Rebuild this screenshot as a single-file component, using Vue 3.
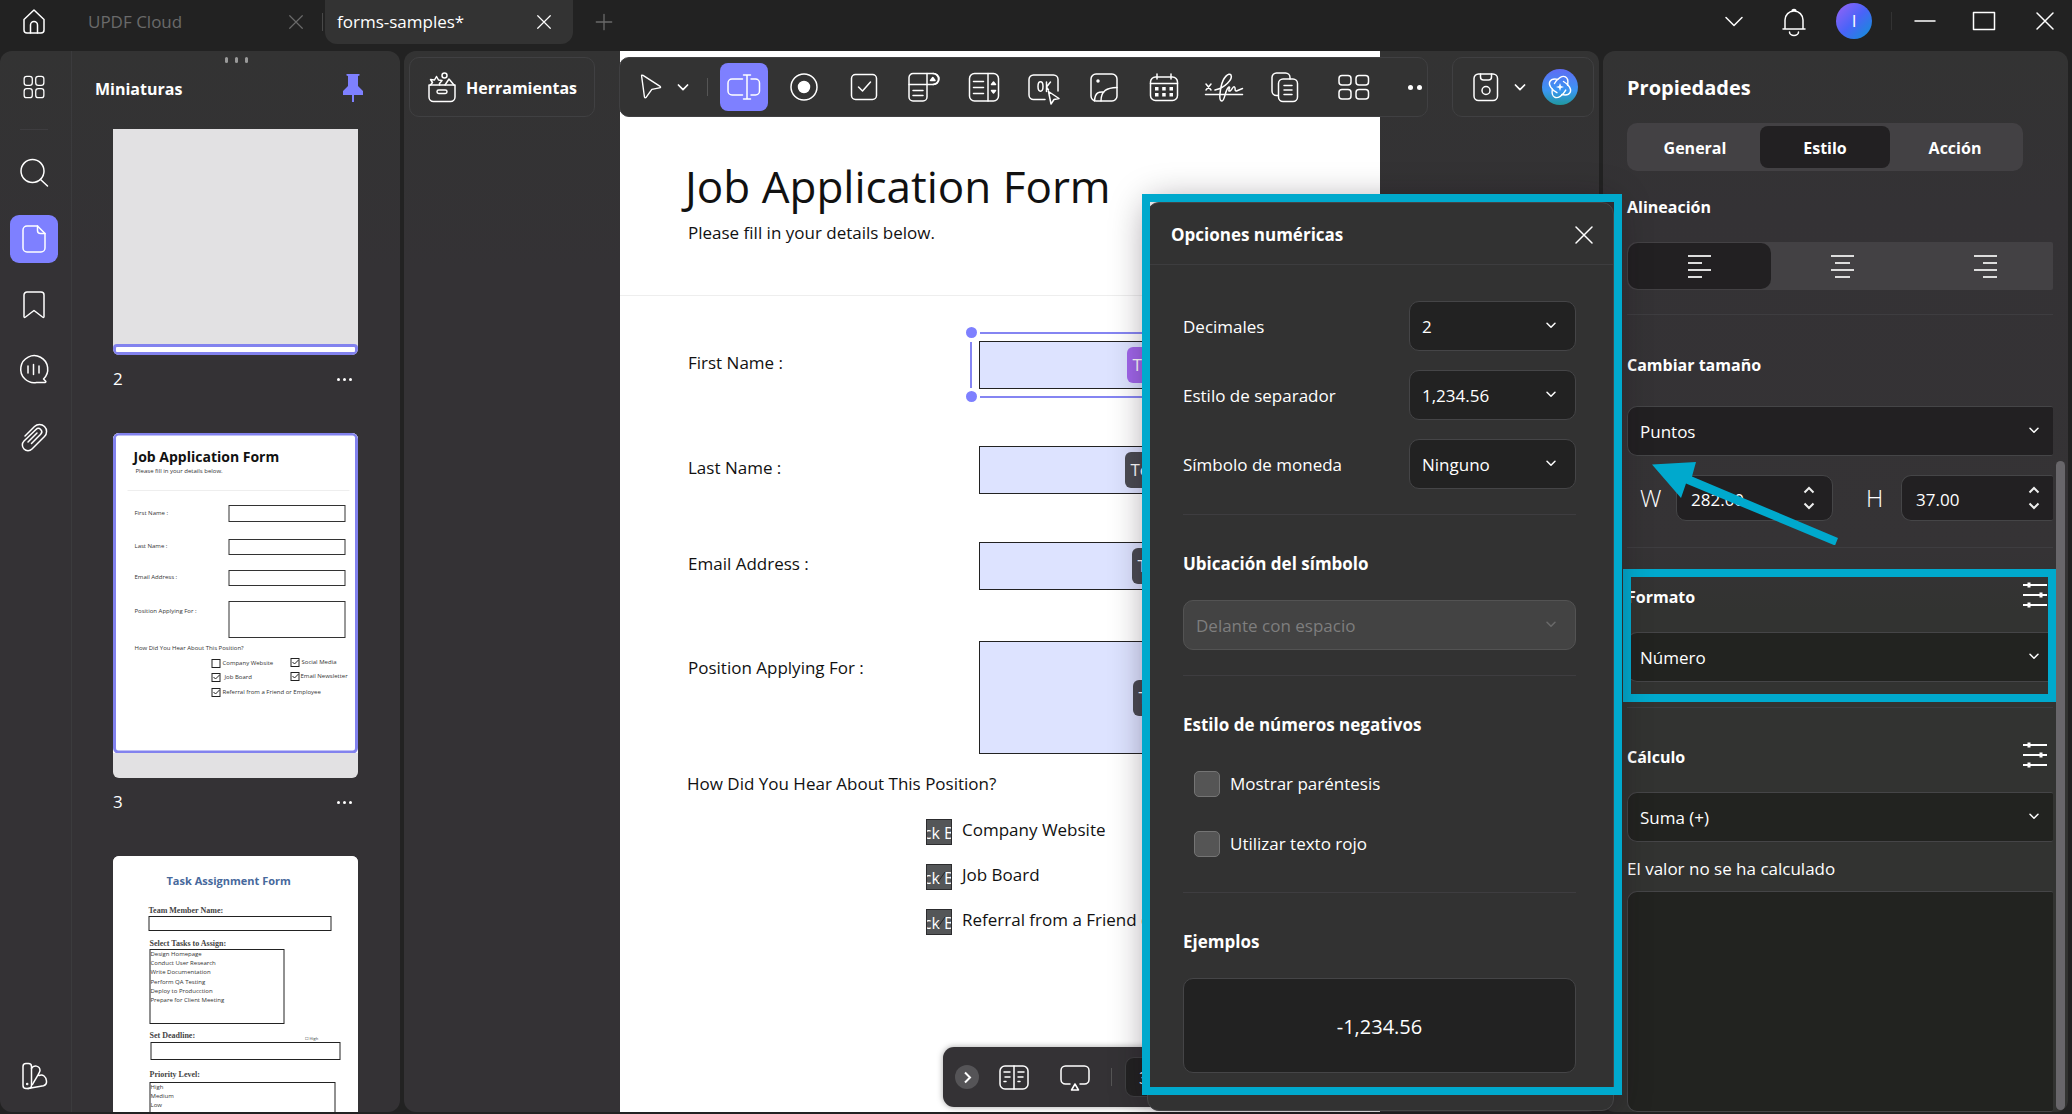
<script setup>
import { ref } from 'vue'

const icons = {
  home: '<path d="M4 12.5 14 3l10 9.500V23a3 3 0 0 1-3 3H7a3 3 0 0 1-3-3Z"/><path d="M10.500 26v-8a3.500 3.500 0 0 1 7 0v8"/>',
  close: '<path d="M6 6l16 16M22 6 6 22"/>',
  plus: '<path d="M14 5v18M5 14h18"/>',
  chevron: '<path d="m6 10.500 8 8 8-8"/>',
  bell: '<path d="M3 22h22M5 22V13a9 9 0 0 1 18 0v9M12 4.500a2 2 0 1 1 4 0M9.500 25a4.500 3.500 0 0 0 9 0"/>',
  minus: '<path d="M4 14h20"/>',
  square: '<path d="M3.500 5.500h21v17h-21z"/>',
  grid: '<rect x="2.500" y="1.500" width="9.500" height="10.500" rx="3"/><rect x="16" y="1.500" width="9.500" height="10.500" rx="3"/><rect x="2.500" y="16" width="9.500" height="10.500" rx="3"/><rect x="16" y="16" width="9.500" height="10.500" rx="3"/>',
  search: '<circle cx="12.500" cy="12" r="11.500"/><path d="m20.500 20.500 7 6.500"/>',
  page: '<path d="M7 1h10.500L25 8.500V23a4 4 0 0 1-4 4H7a4 4 0 0 1-4-4V5a4 4 0 0 1 4-4Z"/><path d="M17.500 1v4.500a3 3 0 0 0 3 3H25"/>',
  bookmark: '<path d="M4 4a3 3 0 0 1 3-3h14a3 3 0 0 1 3 3v21.500q0 1.500-1.500.500L14 19.500 5.500 26Q4 27 4 25.500Z"/>',
  comment: '<g transform="translate(-.5 -1.500)"><path d="M24 23.500a13.500 13.500 0 1 0-7 3.500h8.500q1.500-.500.500-1.500Z"/><path d="M8.500 10.500v7M14 9v10M19.500 10.500v7"/></g>',
  clip: '<path d="M5 13 14.500 3.500a7 7 0 0 1 10 10L12 26a5.300 5.300 0 0 1-8-8L16 6.500a3.300 3.300 0 0 1 4.700 4.700L11.500 20.500"/><path d="m8 19 9-9"/>',
  swatch: '<rect x="3" y="1.500" width="8.500" height="25" rx="3"/><path d="M11.500 6.500c2-4 8.500-3 8.500 2 0 2-5 9-7.500 14M19 13.500c4-1.500 7 1 7.500 5.500.300 2.500-1 4-3 4.700L8 26.500"/><circle cx="7.200" cy="22" r=".5"/>',
  tools: '<path d="M1 11h26v12a4.500 4.500 0 0 1-4.500 4.500h-17A4.500 4.500 0 0 1 1 23Z"/><path d="M2.500 11 4.500 8.500 2.500 5.500l4 .500L8.500 2.500l2 3.500 3.500.500-2.500 3v1.500M17 11l4-6 5 6"/><circle cx="16.500" cy="1.500" r="2.500"/><rect x="9" y="16" width="10" height="3.500" rx="1.700"/>',
  arrow: '<path d="M5 2.500q-.500-2 1.500-1L24.500 13q2 1.500-.500 2l-8 1.500-6 8.500q-1.500 1.500-2-.500Z"/>',
  textfield: '<path d="M12.500 6H2a4 4 0 0 0-4 4v8a4 4 0 0 0 4 4h10.500M21 6h4.500a4 4 0 0 1 4 4v8a4 4 0 0 1-4 4H21M17 2v24M13.500 2h7M13.500 26h7"/>',
  radio: '<circle cx="14" cy="14" r="13"/><circle cx="14" cy="14" r="5.500" fill="currentColor"/>',
  check: '<rect x="1.500" y="1.500" width="25" height="25" rx="4"/><path d="m8.500 14 4 4 8-9"/>',
  combo: '<path d="M4 .500h19.500a5.500 5.500 0 0 1 0 11H-1V4.500a4 4 0 0 1 4-4Z"/><path d="M-1 11.500V24a4 4 0 0 0 4 4H13a4 4 0 0 0 4-4V.500M3 17.500h10M3 22.500h10"/><path d="M20.500 7.500h4.500l-2.200-3Z" fill="currentColor"/><path d="M23 .500a5.500 5.500 0 0 1 0 11"/>',
  list: '<rect x="-.5" y=".5" width="29" height="27.500" rx="5"/><path d="M18 .500V28M3.500 8.500h10M3.500 14.500h10M3.500 20.500h10"/><path d="M21.500 11.500h4l-2-2.500ZM21.500 17.500h4l-2 2.500Z" fill="currentColor"/>',
  okbtn: '<path d="M15 26.500H3.500a4.500 4.500 0 0 1-4.500-4.500V6.500A4.500 4.500 0 0 1 3.500 2h20A4.500 4.500 0 0 1 28 6.500V18"/><ellipse cx="10.500" cy="13.500" rx="2.500" ry="4.700"/><path d="M16.500 9v9.500M20.500 9l-4 5 2 3M18.500 18.500l10.500 7-5 1-3 4.500Z"/>',
  image: '<rect x="1" y="1" width="26" height="27" rx="5"/><path d="M4.500 28c.500-9 5-9.500 9.500-9M11 28C11 17 17 15 27 14.500"/><circle cx="8" cy="8" r="1" fill="currentColor"/>',
  calendar: '<rect x=".5" y="4" width="27" height="23.500" rx="5"/><path d="M.500 10.500h27M7 1v5M21 1v5"/><g fill="currentColor" stroke="none"><rect x="5" y="14" width="3.500" height="3.500"/><rect x="12.200" y="14" width="3.500" height="3.500"/><rect x="19.500" y="14" width="3.500" height="3.500"/><rect x="5" y="20" width="3.500" height="3.500"/><rect x="12.200" y="20" width="3.500" height="3.500"/><rect x="19.500" y="20" width="3.500" height="3.500"/></g>',
  sign: '<path d="m-4 11 5 6M1 11l-5 6M-4.500 21.500h37"/><path d="M5 17c10-2 18-11 16-15-2-3-8 2-10 12-1.500 8-2 14 1 14s3-12 7-14c2-.500-2 5 1 4 2-1 3-5 4.500-4s-.500 4 2 4l6-2.500"/>',
  copy: '<g transform="translate(2 0)"><path d="M6 22.500H4.500A4.500 4.500 0 0 1 0 18V4.500A4.500 4.500 0 0 1 4.500 0h9A4.500 4.500 0 0 1 18 4.500V6"/><rect x="6.500" y="6" width="19" height="22.500" rx="4.500"/><path d="M12 12.500h8M12 17h8M12 21.500h8"/></g>',
  wgrid: '<rect x="-1" y="2.500" width="12" height="9.500" rx="3"/><rect x="16" y="2.500" width="12.500" height="9.500" rx="3"/><rect x="-1" y="16.500" width="12" height="9.500" rx="3"/><rect x="16" y="16.500" width="12.500" height="9.500" rx="3"/>',
  save: '<rect x="2" y="1" width="23.500" height="26.500" rx="4.500"/><path d="M8.500 1v3q0 3 3 3h5q3 0 3-3V1"/><circle cx="14" cy="17.500" r="4"/>',
  ai: '<g fill="none" stroke="#fff" stroke-width="1.400"><ellipse cx="14" cy="14" rx="6.500" ry="11.500" transform="rotate(28 14 14)" stroke-dasharray="23 6"/><ellipse cx="14" cy="14" rx="6.500" ry="11.500" transform="rotate(118 14 14)" stroke-dasharray="23 6"/></g><path d="m14 10 1 3 3 1-3 1-1 3-1-3-3-1 3-1Z" fill="#fff" stroke="none"/>',
  book: '<rect x="0" y="3" width="28" height="23" rx="5"/><path d="M14 3v23M4 9h6M5 14h5M4 18.500h2M18 9h6M18 14h5M18 18.500h2"/>',
  screen: '<path d="M9 21H4.500A4.500 4.500 0 0 1 0 16.500V7.500A4.500 4.500 0 0 1 4.500 3h19A4.500 4.500 0 0 1 28 7.500v9a4.500 4.500 0 0 1-4.500 4.500H19M14 21l-3.500 6h7Z"/>',
}

const rail = ['search', 'page', 'bookmark', 'comment', 'clip']
const railNames = { search: 'Buscar', page: 'Miniaturas', bookmark: 'Marcadores', comment: 'Comentarios', clip: 'Adjuntos' }
const tools = [
  ['textfield', 'Campo de texto'], ['radio', 'Botón de opción'], ['check', 'Casilla'],
  ['combo', 'Desplegable'], ['list', 'Lista'], ['okbtn', 'Botón'], ['image', 'Imagen'],
  ['calendar', 'Fecha'], ['sign', 'Firma'], ['copy', 'Duplicar'],
]

const fields = [
  { label: 'First Name :', tag: 70, cls: 'first' },
  { label: 'Last Name :', tag: 74, cls: 'last' },
  { label: 'Email Address :', tag: 60, cls: 'email' },
  { label: 'Position Applying For :', tag: 58, cls: 'position' },
]
const sources = [
  { label: 'Company Website', on: false },
  { label: 'Job Board', on: true },
  { label: 'Referral from a Friend or Employee', on: true },
]

const miniFields = [
  ['First Name :', 82, 72, 16], ['Last Name :', 115, 106, 15],
  ['Email Address :', 146, 137, 15], ['Position Applying For :', 180, 168, 36],
]
const miniChecks = [
  [98, 226, 'Company Website', 109, false], [98, 240, 'Job Board', 111, true],
  [98, 255, 'Referral from a Friend or Employee', 109, true],
  [177, 225, 'Social Media', 188, true], [177, 239, 'Email Newsletter', 187, true],
]
const tasks = ['Design Homepage', 'Conduct User Research', 'Write Documentation', 'Perform QA Testing', 'Deploy to Producction', 'Prepare for Client Meeting']
const levels = ['High', 'Medium', 'Low']

const options = [
  { id: 'dec', label: 'Decimales', value: '2' },
  { id: 'sep', label: 'Estilo de separador', value: '1,234.56' },
  { id: 'cur', label: 'Símbolo de moneda', value: 'Ninguno' },
]
const width = ref('282.00')
const height = ref('37.00')
const pageNo = ref('3')
</script>

<template>
  <div class="app">
    <header class="titlebar">
      <button class="bare home" aria-label="Inicio"><svg class="ico" viewBox="0 0 28 28" v-html="icons.home" /></button>
      <div class="tab idle">
        <span>UPDF Cloud</span>
        <button class="bare" aria-label="Cerrar"><svg class="ico s20" viewBox="0 0 28 28" v-html="icons.close" /></button>
      </div>
      <i class="vsep tabsep" />
      <div class="tab current">
        <span>forms-samples*</span>
        <button class="bare" aria-label="Cerrar"><svg class="ico s20" viewBox="0 0 28 28" v-html="icons.close" /></button>
      </div>
      <button class="bare add" aria-label="Nueva pestaña"><svg class="ico s24" viewBox="0 0 28 28" v-html="icons.plus" /></button>
      <div class="win">
        <button class="bare" aria-label="Más"><svg class="ico" viewBox="0 0 28 28" v-html="icons.chevron" /></button>
        <button class="bare" aria-label="Avisos"><svg class="ico" viewBox="0 0 28 28" v-html="icons.bell" /></button>
        <button class="avatar">I</button>
        <i class="vsep" />
        <button class="bare" aria-label="Minimizar"><svg class="ico" viewBox="0 0 28 28" v-html="icons.minus" /></button>
        <button class="bare" aria-label="Maximizar"><svg class="ico" viewBox="0 0 28 28" v-html="icons.square" /></button>
        <button class="bare" aria-label="Cerrar ventana"><svg class="ico" viewBox="0 0 28 28" v-html="icons.close" /></button>
      </div>
    </header>

    <div class="body">
      <aside class="left">
        <nav class="rail">
          <button class="bare railbtn" aria-label="Panel"><svg class="ico s24" viewBox="0 0 28 28" v-html="icons.grid" /></button>
          <hr>
          <button v-for="r in rail" :key="r" class="bare railbtn" :class="{ on: r === 'page' }" :aria-label="railNames[r]">
            <svg class="ico" viewBox="0 0 28 28" v-html="icons[r]" />
          </button>
          <button class="bare railbtn last" aria-label="Tema"><svg class="ico" viewBox="0 0 28 28" v-html="icons.swatch" /></button>
        </nav>
        <section class="thumbs">
          <div class="grip"><i /><i /><i /></div>
          <div class="thead">
            <h2>Miniaturas</h2>
            <button class="bare" aria-label="Fijar">
              <svg class="pin" viewBox="0 0 20 28"><path d="M3.500 0h13v1.500L15 2v10l5 5v4h-9v7H9v-7H0v-4l5-5V2L3.500 1.500Z" fill="#7e80ff" /></svg>
            </button>
          </div>
          <div class="thumblist">
            <div class="thumb blank"><div /></div>
            <div class="cap"><span>2</span><button class="bare dots" aria-label="Opciones"><i /><i /><i /></button></div>
            <div class="thumb active">
              <svg class="mini" viewBox="0 0 244 320">
                <text x="20" y="29" font-size="14" class="mt">Job Application Form</text>
                <text x="22" y="40" font-size="6">Please fill in your details below.</text>
                <path d="M14 57.500h222" stroke="#eee" />
                <g v-for="f in miniFields" :key="f[0]">
                  <text x="21" :y="f[1]" font-size="6">{{ f[0] }}</text>
                  <rect x="115.500" :y="f[2] + 0.5" width="116" :height="f[3]" fill="none" stroke="#333" />
                </g>
                <text x="21" y="217" font-size="6">How Did You Hear About This Position?</text>
                <g v-for="c in miniChecks" :key="c[2]">
                  <rect :x="c[0] + 0.5" :y="c[1] + 0.5" width="8" height="8" fill="none" stroke="#222" />
                  <path v-if="c[4]" :d="`M${c[0] + 2} ${c[1] + 4}l2 2 4-4`" fill="none" stroke="#222" />
                  <text :x="c[3]" :y="c[1] + 6" font-size="6">{{ c[2] }}</text>
                </g>
                <rect x="1" y="1" width="242" height="318" rx="4" fill="none" stroke="#8282ee" stroke-width="3" />
              </svg>
            </div>
            <div class="cap"><span>3</span><button class="bare dots" aria-label="Opciones"><i /><i /><i /></button></div>
            <div class="thumb next">
              <svg class="mini" viewBox="0 0 244 320">
                <text x="53" y="29" font-size="11" class="tt">Task Assignment Form</text>
                <g class="sf" font-size="8">
                  <text x="35" y="57">Team Member Name:</text>
                  <text x="36" y="90">Select Tasks to Assign:</text>
                  <text x="36" y="182">Set Deadline:</text>
                  <text x="36" y="221">Priority Level:</text>
                </g>
                <g fill="none" stroke="#222">
                  <rect x="35.500" y="60.500" width="182" height="14" />
                  <rect x="36.500" y="93.500" width="134" height="74" />
                  <rect x="37.500" y="186.500" width="189" height="17" />
                  <rect x="36.500" y="226.500" width="185" height="60" />
                </g>
                <text v-for="(t, i) in tasks" :key="t" x="37" :y="100 + i * 9.200" font-size="6">{{ t }}</text>
                <text x="191" y="184" font-size="4">☐ High</text>
                <text v-for="(t, i) in levels" :key="t" x="37" :y="233 + i * 9.200" font-size="6">{{ t }}</text>
              </svg>
            </div>
          </div>
        </section>
      </aside>

      <main class="center">
        <div class="page">
          <div class="phead">
            <h1>Job Application Form</h1>
            <p>Please fill in your details below.</p>
          </div>
          <div v-for="f in fields" :key="f.cls" class="frow" :class="f.cls">
            <span class="flabel">{{ f.label }}</span>
            <div class="fbox">
              <span class="ftag" :style="{ width: f.tag + 'px' }">Texto</span>
              <template v-if="f.cls === 'first'">
                <i class="sel top" /><i class="sel bottom" /><i class="sel side" />
                <i class="knob a" /><i class="knob b" />
              </template>
            </div>
          </div>
          <p class="how">How Did You Hear About This Position?</p>
          <ul class="sources">
            <li v-for="s in sources" :key="s.label">
              <span class="cbox"><span>ck B</span><svg v-if="s.on" viewBox="0 0 22 22"><path d="m11 17 7-10" /></svg></span>
              <span>{{ s.label }}</span>
            </li>
          </ul>
        </div>

        <div class="bars">
          <button class="bar herr"><svg class="ico" viewBox="0 0 28 28" v-html="icons.tools" />Herramientas</button>
          <div class="bar tools">
            <button class="bare ptr" aria-label="Seleccionar"><svg class="ico s26" viewBox="0 0 28 28" v-html="icons.arrow" /></button>
            <button class="bare caret" aria-label="Más"><svg class="ico s16" viewBox="0 0 28 28" v-html="icons.chevron" /></button>
            <i class="vsep" />
            <div class="set">
              <button v-for="t in tools" :key="t[0]" class="bare tool" :class="{ on: t[0] === 'textfield' }" :aria-label="t[1]">
                <svg class="ico" viewBox="0 0 28 28" v-html="icons[t[0]]" />
              </button>
              <button class="bare tool arrange" aria-label="Organizar"><svg class="ico" viewBox="0 0 28 28" v-html="icons.wgrid" /></button>
            </div>
            <button class="bare dots two" aria-label="Más herramientas"><i /><i /></button>
          </div>
          <div class="bar savebar">
            <button class="bare" aria-label="Guardar"><svg class="ico" viewBox="0 0 28 28" v-html="icons.save" /></button>
            <button class="bare caret" aria-label="Más"><svg class="ico s16" viewBox="0 0 28 28" v-html="icons.chevron" /></button>
            <button class="bare ai" aria-label="UPDF AI"><svg class="ico" viewBox="0 0 28 28" v-html="icons.ai" /></button>
          </div>
        </div>

        <div class="pager">
          <button class="go" aria-label="Desplegar"><svg viewBox="0 0 24 24"><path d="m10 7.500 5 5-5 5" /></svg></button>
          <button class="bare" aria-label="Vista"><svg class="ico" viewBox="0 0 28 28" v-html="icons.book" /></button>
          <button class="bare" aria-label="Presentación"><svg class="ico" viewBox="0 0 28 28" v-html="icons.screen" /></button>
          <i class="vsep" />
          <input v-model="pageNo" aria-label="Página">
        </div>
      </main>

      <aside class="right">
        <h2 class="ptitle">Propiedades</h2>
        <div class="tabs">
          <button>General</button><button class="on">Estilo</button><button>Acción</button>
        </div>
        <h3 class="h-align">Alineación</h3>
        <div class="aligns">
          <button class="on" aria-label="Izquierda"><svg viewBox="0 0 23 24"><path d="M0 2h23M0 9h14M0 16h23M0 23h14" /></svg></button>
          <button aria-label="Centro"><svg viewBox="0 0 23 24"><path d="M0 2h23M4 9h15M0 16h23M4 23h15" /></svg></button>
          <button aria-label="Derecha"><svg viewBox="0 0 23 24"><path d="M0 2h23M9 9h14M0 16h23M9 23h14" /></svg></button>
        </div>
        <hr>
        <section class="size">
          <h3><label for="unit">Cambiar tamaño</label></h3>
          <div class="pick"><select id="unit"><option>Puntos</option></select><svg class="ico s14" viewBox="0 0 28 28" v-html="icons.chevron" /></div>
          <div class="dims">
            <label for="w">W</label>
            <div class="num"><input id="w" v-model="width"><svg viewBox="0 0 12 24"><path d="m1.500 6.500 4.500-4.500 4.500 4.500M1.500 17.500 6 22l4.500-4.500" /></svg></div>
            <label for="h" class="hl">H</label>
            <div class="num cut"><input id="h" v-model="height"><svg viewBox="0 0 12 24"><path d="m1.500 6.500 4.500-4.500 4.500 4.500M1.500 17.500 6 22l4.500-4.500" /></svg></div>
          </div>
          <svg class="pointer" viewBox="0 0 188 84"><path d="M0 3.500 44 1l-4 14.500 146 61.500-3 7.500-149-62L29 37Z" fill="#00a9cd" /></svg>
        </section>
        <hr>
        <section class="format">
          <div class="hrow">
            <h3><label for="fmt">Formato</label></h3>
            <button class="bare" aria-label="Opciones de formato"><svg class="sliders" viewBox="0 0 24 26"><path d="M0 3h24M0 13h24M0 23h24" /><path d="M6 .500v5M18 10.500v5M6 20.500v5" class="k" /></svg></button>
          </div>
          <div class="pick"><select id="fmt"><option>Número</option></select><svg class="ico s14" viewBox="0 0 28 28" v-html="icons.chevron" /></div>
          <div class="mark" />
        </section>
        <hr>
        <section class="calc">
          <div class="hrow">
            <h3><label for="calc">Cálculo</label></h3>
            <button class="bare" aria-label="Opciones de cálculo"><svg class="sliders" viewBox="0 0 24 26"><path d="M0 3h24M0 13h24M0 23h24" /><path d="M6 .500v5M18 10.500v5M6 20.500v5" class="k" /></svg></button>
          </div>
          <div class="pick"><select id="calc"><option>Suma (+)</option></select><svg class="ico s14" viewBox="0 0 28 28" v-html="icons.chevron" /></div>
          <label for="val" class="note">El valor no se ha calculado</label>
          <textarea id="val" />
        </section>
        <div class="scroll" />
      </aside>
    </div>

    <section class="dialog" role="dialog" aria-labelledby="dt">
      <header>
        <h2 id="dt">Opciones numéricas</h2>
        <button class="bare" aria-label="Cerrar"><svg class="ico" viewBox="0 0 28 28" v-html="icons.close" /></button>
      </header>
      <div class="dbody">
        <div v-for="o in options" :key="o.id" class="opt">
          <label :for="o.id">{{ o.label }}</label>
          <div class="pick"><select :id="o.id"><option>{{ o.value }}</option></select><svg class="ico s14" viewBox="0 0 28 28" v-html="icons.chevron" /></div>
        </div>
        <hr>
        <h3><label for="place">Ubicación del símbolo</label></h3>
        <div class="pick off"><select id="place" disabled><option>Delante con espacio</option></select><svg class="ico s14" viewBox="0 0 28 28" v-html="icons.chevron" /></div>
        <hr>
        <h3>Estilo de números negativos</h3>
        <div class="ticks">
          <label class="tick"><input type="checkbox">Mostrar paréntesis</label>
          <label class="tick"><input type="checkbox">Utilizar texto rojo</label>
        </div>
        <hr class="after">
        <h3>Ejemplos</h3>
        <output class="sample">-1,234.56</output>
      </div>
    </section>
    <div class="mark big" />
  </div>
</template>

<style>
body { margin: 0; background: #222; }
</style>

<style scoped>
* { box-sizing: border-box; }
h1, h2, h3, p, ul, hr { margin: 0; padding: 0; }
hr { border: 0; border-top: 1px solid #3e3d40; }
.app {
  position: relative; display: flex; flex-direction: column; height: 100vh; overflow: hidden;
  background: #222; color: #fff; font: 17px/24px "Open Sans", "Noto Sans", sans-serif;
}
button, input, select, textarea { font: inherit; color: inherit; margin: 0; }
.bare { display: flex; align-items: center; justify-content: center; padding: 0; border: 0; background: none; }
.ico { width: 28px; height: 28px; fill: none; stroke: currentColor; stroke-width: 1.5; stroke-linecap: round; stroke-linejoin: round; overflow: visible; flex: none; }
.s26 { width: 26px; height: 26px; }
.s24 { width: 24px; height: 24px; }
.s20 { width: 22px; height: 22px; }
.s16 { width: 16px; height: 16px; stroke-width: 3; }
.s14 { width: 14px; height: 14px; stroke-width: 3; }
.vsep { width: 1px; height: 18px; background: #555; }

/* title bar */
.titlebar { display: flex; align-items: flex-start; height: 51px; flex: none; }
.home { width: 68px; height: 42px; }
.tab { display: flex; align-items: center; justify-content: space-between; height: 44px; }
.tab.idle { width: 254px; padding: 0 15px 0 20px; color: #6a6a6a; }
.tabsep { margin-top: 13px; background: #484848; }
.tab.current { width: 248px; margin-left: 2px; padding: 0 18px 0 12px; background: #333; border-radius: 0 0 12px 12px; }
.add { width: 62px; height: 44px; color: #6a6a6a; }
.win { display: flex; align-items: center; height: 42px; margin-left: auto; padding-right: 13px; }
.win > .bare { width: 28px; }
.win > .bare:nth-child(2) { margin-left: 32px; }
.win > .bare:nth-child(5) { margin-left: 19px; }
.win > .bare:nth-child(6) { margin-left: 31px; }
.win > .bare:nth-child(7) { margin-left: 33px; }
.avatar { width: 36px; height: 36px; margin: 0 19px 0 28px; padding: 0; border: 0; border-radius: 50%; background: linear-gradient(135deg, #9a63f5, #4a63f8 50%, #0d93d4); }
.win .vsep { background: #333; }

.body { display: flex; flex: 1; min-height: 0; padding: 0 4px 2px 0; gap: 4px; }
.left, .center, .right { background: linear-gradient(#333, #343235 220px); border-radius: 12px; overflow: hidden; }

/* left panel */
.left { display: flex; width: 400px; flex: none; }
.rail { display: flex; flex-direction: column; align-items: center; width: 72px; padding: 12px 4px 12px 0; border-right: 1px solid #3b3b3d; }
.railbtn { width: 48px; height: 48px; margin-bottom: 18px; border-radius: 9px; flex: none; }
.railbtn.on { background: #7e80ff; }
.rail hr { width: 28px; margin-bottom: 19px; }
.railbtn.last { margin: auto 0 0; }
.thumbs { display: flex; flex-direction: column; flex: 1; min-width: 0; }
.grip { display: flex; justify-content: center; gap: 7px; padding-top: 6px; height: 12px; }
.grip i { width: 3px; height: 6px; border-radius: 2px; background: #999; }
.thead { display: flex; justify-content: space-between; align-items: center; height: 50px; padding: 0 37px 0 23px; }
h2, h3 { font-size: 16px; line-height: 24px; font-weight: 700; }
.thead h2 { padding-top: 2px; }
.pin { width: 20px; height: 28px; }
.thumblist { flex: 1; min-height: 0; overflow: hidden; padding: 16px 42px 0 41px; }
.thumb { overflow: hidden; border-radius: 6px; background: #e2e1e3; }
.thumb.blank { display: flex; align-items: flex-end; height: 226px; border-radius: 0 0 6px 6px; }
.blank div { width: 100%; height: 11px; border: 3px solid #8282ee; border-radius: 4px; background: #fff; }
.thumb.active { height: 345px; }
.mini { display: block; width: 100%; height: 320px; background: #fff; }
.mini text { fill: #333; }
.mini .mt { font-weight: 700; fill: #111; }
.mini .tt { font-weight: 700; fill: #47699c; }
.mini .sf text { font-family: "Liberation Serif", serif; font-weight: 700; fill: #444; }
.cap { display: flex; justify-content: space-between; align-items: center; height: 78px; padding: 0 6px 30px 0; }
.dots { gap: 3px; height: 24px; }
.dots i { width: 3px; height: 3px; border-radius: 50%; background: #fff; }

/* document */
.center { position: relative; display: flex; flex: 1; min-width: 0; }
.page { flex: 1; min-width: 0; margin: 0 219px 0 216px; background: #fff; color: #111; }
.phead { height: 245px; padding: 105px 0 0 65px; border-bottom: 1px solid #eee; }
h1 { font-size: 44px; line-height: 60px; font-weight: 500; white-space: nowrap; }
.phead p { margin-top: 5px; padding-left: 3px; }
.frow { display: flex; padding: 0 36px 0 68px; }
.flabel { flex: 0 0 291px; padding-top: 10px; }
.fbox { position: relative; display: flex; align-items: center; justify-content: center; flex: 1; height: 48px; border: 1px solid #222; background: #dde3ff; }
.ftag { height: 36px; padding-left: 6px; border-radius: 6px; background: #4a4b52; color: #fff; line-height: 36px; }
.first { margin-top: 45px; }
.first .ftag { background: #a066ea; }
.last { margin-top: 57px; }
.email { margin-top: 48px; }
.position { margin-top: 51px; }
.position .flabel { padding-top: 15px; }
.position .fbox { height: 113px; }
.sel { position: absolute; background: #8585f2; }
.sel.top { left: 0; right: 0; top: -10px; height: 2px; }
.sel.bottom { left: 0; right: 0; bottom: -10px; height: 2px; }
.sel.side { left: -10px; top: 0; bottom: 0; width: 2px; }
.knob { position: absolute; left: -14px; width: 11px; height: 11px; border-radius: 50%; background: #7e80ff; }
.knob.a { top: -15px; }
.knob.b { bottom: -14px; }
.how { margin: 18px 0 0 67px; }
.sources { list-style: none; margin: 23px 0 0 306px; }
.sources li { display: flex; gap: 10px; height: 45px; line-height: 22px; white-space: nowrap; }
.cbox { position: relative; display: flex; justify-content: center; width: 26px; height: 26px; flex: none; overflow: hidden; border: 1px solid #2c2c2e; background: #545658; color: #fff; font-size: 16px; line-height: 26px; }
.cbox svg { position: absolute; left: 0; top: 0; width: 22px; height: 22px; fill: none; stroke: #2a2a2a; }

/* floating bars */
.bars { position: absolute; top: 6px; left: 5px; right: 5px; display: flex; }
.bar { display: flex; align-items: center; height: 60px; border: 1px solid #404042; border-radius: 10px; background: #333; }
.herr { width: 186px; padding: 2px 0 0 18px; gap: 10px; font-size: 16px; font-weight: 700; background: transparent; }
.tools { flex: 1; min-width: 0; margin: 0 24px; padding: 0 5px 0 17px; }
.caret { width: 16px; margin-left: 12px; }
.tools .vsep { margin: 0 12px 0 16px; background: #555; }
.set { display: flex; gap: 12px; }
.tool { width: 48px; height: 48px; border-radius: 8px; }
.tool.on { background: #7e80ff; }
.arrange { margin-left: 10px; }
.two { margin-left: auto; gap: 4px; }
.two i { width: 5px; height: 5px; }
.savebar { width: 142px; padding-left: 19px; }
.ai { width: 36px; height: 36px; margin-left: 14px; border-radius: 50%; background: linear-gradient(#5f6cf4, #3a96f2 60%, #20989f); }

.pager { position: absolute; left: 539px; bottom: 5px; display: flex; align-items: center; width: 400px; height: 60px; padding-left: 12px; border-radius: 11px; background: #343235; box-shadow: 0 0 6px rgba(0, 0, 0, .35); }
.go { width: 24px; height: 24px; padding: 0; border: 0; border-radius: 50%; background: #555457; }
.go svg { display: block; width: 24px; height: 24px; fill: none; stroke: #fff; stroke-width: 2; }
.pager .bare { margin-left: 21px; }
.pager .bare + .bare { margin-left: 33px; }
.pager .vsep { margin: 0 13px 0 22px; }
.pager input { width: 90px; height: 40px; padding: 0 0 0 13px; border: 1px solid #404042; border-radius: 9px; background: #222; }

/* properties */
.right { position: relative; display: flex; flex-direction: column; flex: none; width: 465px; padding: 0 15px 0 24px; background: linear-gradient(#333, #343235 160px, #353335 500px, #323331 560px); }
.ptitle { margin-top: 22px; font-size: 20px; line-height: 30px; }
.tabs { display: flex; width: 396px; height: 48px; margin-top: 20px; padding: 3px; border-radius: 10px; background: #434144; }
.tabs button { flex: 1; padding-top: 3px; border: 0; border-radius: 8px; background: none; font-size: 16px; font-weight: 700; }
.tabs .on { background: #222022; }
.h-align { margin-top: 24px; }
.aligns { display: flex; height: 48px; flex: none; margin: 23px 0 24px; padding: 1px; overflow: hidden; border-radius: 10px 2px 2px 10px; background: #434144; }
.aligns button { display: flex; align-items: center; justify-content: center; flex: 0 0 143px; padding: 0; border: 0; border-radius: 10px; background: none; }
.aligns .on { background: #222022; }
.aligns svg { width: 23px; height: 24px; stroke: #ddd; stroke-width: 2; }
.pick { position: relative; height: 50px; }
.pick select { width: 100%; height: 100%; padding: 2px 0 0 12px; appearance: none; border: 1px solid #454547; border-radius: 10px; background: #222; opacity: 1; }
.pick .ico { position: absolute; right: 18px; top: 17px; pointer-events: none; }
.right .pick select { border-right: 0; border-radius: 10px 2px 2px 10px; }
.right .pick .ico { right: 12px; }
.right #unit { background: #222022; }
.right #fmt, .right #calc, .right textarea { background: #222320; }
.size { position: relative; padding: 38px 0 26px; }
.size .pick { margin-top: 29px; }
.dims { display: flex; align-items: center; margin-top: 19px; }
.dims > label { width: 49px; padding-left: 13px; font-size: 24px; font-weight: 300; }
.dims > .hl { width: 68px; padding-left: 33px; }
.num { position: relative; width: 157px; height: 46px; }
.num.cut { width: auto; flex: 1; }
.num input { width: 100%; height: 100%; padding: 3px 0 0 14px; border: 1px solid #454547; border-radius: 10px; background: #222022; }
.cut input { border-right: 0; border-radius: 10px 2px 2px 10px; }
.num svg { position: absolute; right: 18px; top: 11px; width: 12px; height: 24px; fill: none; stroke: #eee; stroke-width: 2; }
.num.cut svg { right: 13px; }
.pointer { position: absolute; left: 25px; top: 146px; width: 188px; height: 84px; }
.format { position: relative; padding: 34px 0 25px; }
.hrow { display: flex; align-items: flex-start; justify-content: space-between; height: 50px; padding-right: 6px; }
.hrow h3 { padding-top: 3px; }
.sliders { width: 24px; height: 26px; fill: none; stroke: #fff; stroke-width: 2; }
.sliders .k { stroke-width: 3; }
.mark { position: absolute; left: -4px; right: -3px; top: 21px; height: 133px; border: 8px solid #00a9cd; pointer-events: none; }
.calc { display: flex; flex-direction: column; flex: 1; min-height: 0; padding-top: 34px; }
.hrow, .calc .pick, .note { flex: none; }
.note { display: block; margin: 15px 0 10px; }
.calc textarea { flex: 1; width: 100%; resize: none; border: 1px solid #454547; border-right: 0; border-radius: 10px 2px 2px 10px; }
.scroll { position: absolute; right: 3px; top: 410px; bottom: 2px; width: 9px; border-radius: 5px; background: #68666a; }

/* dialog */
.dialog { position: absolute; right: 458px; top: 202px; bottom: 3px; width: 467px; border: 1px solid #454547; border-radius: 12px; background: #323232; box-shadow: 0 0 36px rgba(20, 0, 20, .4); }
.dialog header { display: flex; align-items: center; justify-content: space-between; height: 62px; padding: 2px 15px 0 23px; border-bottom: 1px solid #3d3d3f; }
.dbody { padding: 36px 37px 0 35px; }
.opt { display: flex; align-items: center; justify-content: space-between; margin-bottom: 19px; }
.opt > label { padding-top: 2px; }
.opt .pick { width: 167px; }
.dbody hr { margin: 25px 0 37px; }
.dbody h3 { margin-bottom: 24px; }
.dialog h2, .dialog h3 { font-size: 17px; }
.pick.off select { background: #434343; border-color: #535353; color: #7e7e7e; }
.pick.off .ico { color: #6a6a6a; }
.ticks { padding-top: 10px; }
.tick { display: flex; align-items: center; gap: 10px; height: 26px; margin: 0 0 34px 11px; }
.tick input { appearance: none; width: 26px; height: 26px; border: 1px solid #747474; border-radius: 5px; background: #555; }
.dbody hr.after { margin-top: 35px; }
.sample { display: flex; align-items: center; justify-content: center; height: 95px; padding-top: 2px; border: 1px solid #454547; border-radius: 10px; background: #222; font-size: 20px; }
.mark.big { left: auto; right: 450px; top: 194px; bottom: 19px; width: 480px; height: auto; }
</style>
